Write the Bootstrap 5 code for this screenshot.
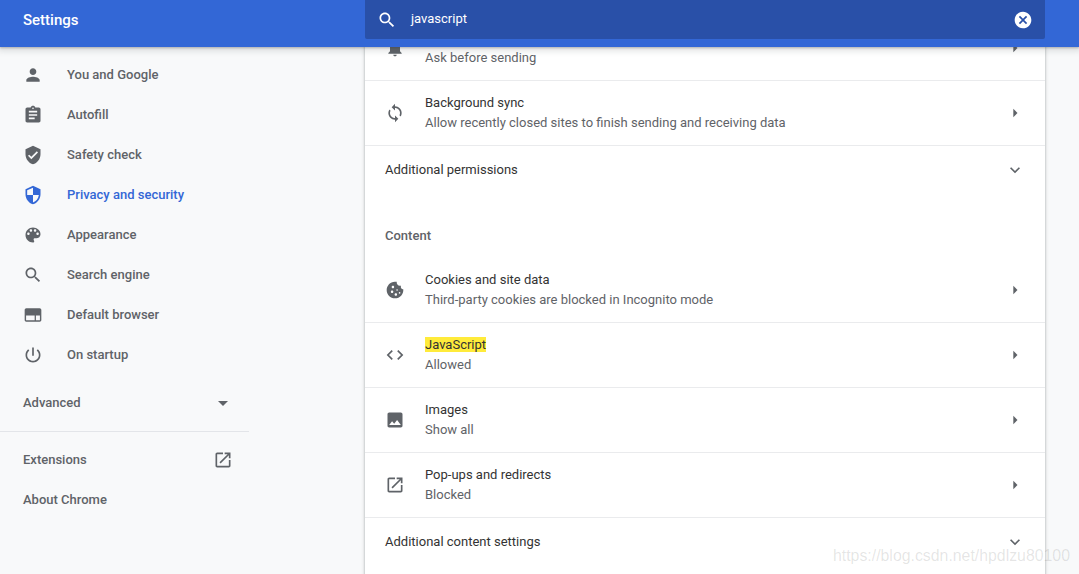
<!DOCTYPE html>
<html lang="en">
<head>
<meta charset="utf-8">
<title>Settings</title>
<link href="https://cdn.jsdelivr.net/npm/bootstrap@5.3.0/dist/css/bootstrap.min.css" rel="stylesheet">
<style>
html,body{height:100%;overflow:hidden}
body{background:#f8f9fa;font-family:Roboto,"Liberation Sans",sans-serif;font-size:13px;color:#333}
svg{fill:currentColor;flex:none;display:block}
.shell{height:574px;position:relative}
.topbar{height:47px;background:#3367d6;color:#fff;position:relative;z-index:2;box-shadow:0 1px 2px rgba(60,64,67,.3),0 2px 6px 2px rgba(60,64,67,.15)}
.brand{width:365px;padding-left:23px;font-size:15px;font-weight:500;height:39px;line-height:40px}
.searchbox{width:680px;height:39px;background:#2950a8;padding:0 12px 0 12px;border-radius:0 0 2px 2px}
.searchbox .term{margin-left:14px;font-size:13px;flex:1;padding-bottom:2px}
.body-area{height:527px;overflow:hidden}
.side{width:249px;padding-top:8px;color:#5f6368;font-weight:500}
.side-item{height:40px;padding-left:23px;gap:20px}
.side-item.on{color:#3367d6}
.side-plain{height:40px;padding:0 16px 0 23px}
.side-rule{border-top:1px solid #e3e5e9;margin:8px 0}
.adv{margin-top:8px}
.adv svg{margin-right:-2px}
.gutter{width:116px;flex:none}
.sheet{width:680px;flex:none;background:#fff;margin-top:-31px;height:600px;box-shadow:0 1px 2px 0 rgba(60,64,67,.3),0 1px 3px 1px rgba(60,64,67,.15)}
.line-item{height:65px;padding:0 20px;border-bottom:1px solid #eaebed;gap:20px;color:#5f6368}
.line-item .txt{flex:1;line-height:20px}
.line-item .ttl{color:#333;display:block;min-height:20px}
.line-item .sub{display:block}
.extra{height:48px;padding:0 20px;color:#333}
.extra svg{color:#5f6368}
.section-head{color:#5f6368;font-weight:500;height:64px;padding:32px 20px 0;line-height:20px}
.hit{background:#ffeb3b}
.stamp{position:absolute;left:833px;top:546px;font-family:"Liberation Sans",Arial,sans-serif;font-size:15.85px;line-height:20px;color:rgba(90,90,90,.16);z-index:3;white-space:nowrap}
</style>
</head>
<body>
<div class="shell">
  <header class="topbar d-flex">
    <div class="brand">Settings</div>
    <div class="searchbox d-flex align-items-center">
      <svg width="20" height="20" viewBox="0 0 24 24"><path d="M15.5 14h-.79l-.28-.27C15.41 12.59 16 11.11 16 9.5 16 5.91 13.09 3 9.5 3S3 5.91 3 9.5 5.91 16 9.5 16c1.61 0 3.09-.59 4.23-1.57l.27.28v.79l5 4.99L20.49 19l-4.99-5zm-6 0C7.01 14 5 11.99 5 9.5S7.01 5 9.5 5 14 7.01 14 9.5 11.99 14 9.5 14z"/></svg>
      <span class="term">javascript</span>
      <svg width="20" height="20" viewBox="0 0 24 24"><path d="M12 2C6.47 2 2 6.47 2 12s4.47 10 10 10 10-4.47 10-10S17.53 2 12 2zm5 13.59L15.59 17 12 13.41 8.41 17 7 15.59 10.59 12 7 8.41 8.41 7 12 10.59 15.59 7 17 8.41 13.41 12 17 15.59z"/></svg>
    </div>
  </header>
  <div class="body-area d-flex">
    <nav class="side flex-shrink-0">
      <div class="side-item d-flex align-items-center"><svg width="20" height="20" viewBox="0 0 24 24"><path d="M12 12c2.21 0 4-1.79 4-4s-1.79-4-4-4-4 1.79-4 4 1.79 4 4 4zm0 2c-2.67 0-8 1.34-8 4v2h16v-2c0-2.66-5.33-4-8-4z"/></svg><span class="ms-1">You and Google</span></div>
      <div class="side-item d-flex align-items-center"><svg width="20" height="20" viewBox="0 0 24 24"><path d="M19 3h-4.18C14.4 1.84 13.3 1 12 1c-1.3 0-2.4.84-2.82 2H5c-1.1 0-2 .9-2 2v14c0 1.1.9 2 2 2h14c1.1 0 2-.9 2-2V5c0-1.1-.9-2-2-2zm-7 0c.55 0 1 .45 1 1s-.45 1-1 1-1-.45-1-1 .45-1 1-1zm2 14H7v-2h7v2zm3-4H7v-2h10v2zm0-4H7V7h10v2z"/></svg><span class="ms-1">Autofill</span></div>
      <div class="side-item d-flex align-items-center"><svg width="20" height="20" viewBox="0 0 24 24"><path d="M12 1L3 5v6c0 5.55 3.84 10.74 9 12 5.16-1.26 9-6.45 9-12V5l-9-4zm-2 16l-4-4 1.41-1.41L10 14.17l6.59-6.59L18 9l-8 8z"/></svg><span class="ms-1">Safety check</span></div>
      <div class="side-item on d-flex align-items-center"><svg width="20" height="20" viewBox="0 0 24 24"><path d="M12 1L3 5v6c0 5.55 3.84 10.74 9 12 5.16-1.26 9-6.45 9-12V5l-9-4zm0 10.99h7c-.53 4.12-3.28 7.79-7 8.94V12H5V6.3l7-3.11v8.8z"/></svg><span class="ms-1">Privacy and security</span></div>
      <div class="side-item d-flex align-items-center"><svg width="20" height="20" viewBox="0 0 24 24"><path d="M12 3c-4.97 0-9 4.03-9 9s4.03 9 9 9c.83 0 1.5-.67 1.5-1.5 0-.39-.15-.74-.39-1.01-.23-.26-.38-.61-.38-.99 0-.83.67-1.5 1.5-1.5H16c2.76 0 5-2.24 5-5 0-4.42-4.03-8-9-8zm-5.5 9c-.83 0-1.5-.67-1.5-1.5S5.67 9 6.5 9 8 9.67 8 10.5 7.33 12 6.5 12zm3-4C8.67 8 8 7.33 8 6.5S8.67 5 9.5 5s1.5.67 1.5 1.5S10.33 8 9.5 8zm5 0c-.83 0-1.5-.67-1.5-1.5S13.67 5 14.5 5s1.5.67 1.5 1.5S15.33 8 14.5 8zm3 4c-.83 0-1.5-.67-1.5-1.5S16.67 9 17.5 9s1.5.67 1.5 1.5-.67 1.5-1.5 1.5z"/></svg><span class="ms-1">Appearance</span></div>
      <div class="side-item d-flex align-items-center"><svg width="20" height="20" viewBox="0 0 24 24"><path d="M15.5 14h-.79l-.28-.27C15.41 12.59 16 11.11 16 9.5 16 5.91 13.09 3 9.5 3S3 5.91 3 9.5 5.91 16 9.5 16c1.61 0 3.09-.59 4.23-1.57l.27.28v.79l5 4.99L20.49 19l-4.99-5zm-6 0C7.01 14 5 11.99 5 9.5S7.01 5 9.5 5 14 7.01 14 9.5 11.99 14 9.5 14z"/></svg><span class="ms-1">Search engine</span></div>
      <div class="side-item d-flex align-items-center"><svg width="20" height="20" viewBox="0 0 24 24"><path fill-rule="evenodd" d="M20 4H4c-1.1 0-2 .9-2 2v12c0 1.1.9 2 2 2h16c1.1 0 2-.9 2-2V6c0-1.1-.9-2-2-2zM14 18.4H3.7v-5.9H14zm6.3 0h-4.8v-5.9h4.8z"/></svg><span class="ms-1">Default browser</span></div>
      <div class="side-item d-flex align-items-center"><svg width="20" height="20" viewBox="0 0 24 24"><path d="M13 3h-2v10h2V3zm4.83 2.17l-1.42 1.42C17.99 7.86 19 9.81 19 12c0 3.87-3.13 7-7 7s-7-3.13-7-7c0-2.19 1.01-4.14 2.58-5.42L6.17 5.17C4.23 6.82 3 9.26 3 12c0 4.97 4.03 9 9 9s9-4.03 9-9c0-2.74-1.23-5.18-3.17-6.83z"/></svg><span class="ms-1">On startup</span></div>
      <div class="side-plain adv d-flex align-items-center justify-content-between"><span>Advanced</span><svg width="24" height="24" viewBox="0 0 24 24"><path d="M7 10l5 5 5-5z"/></svg></div>
      <div class="side-rule"></div>
      <div class="side-plain d-flex align-items-center justify-content-between"><span>Extensions</span><svg width="20" height="20" viewBox="0 0 24 24"><path d="M19 19H5V5h7V3H5c-1.11 0-2 .9-2 2v14c0 1.1.89 2 2 2h14c1.1 0 2-.9 2-2v-7h-2v7zM14 3v2h3.59l-9.83 9.83 1.41 1.41L19 6.41V10h2V3h-7z"/></svg></div>
      <div class="side-plain d-flex align-items-center"><span>About Chrome</span></div>
    </nav>
    <div class="gutter"></div>
    <main class="sheet">
      <div class="line-item d-flex align-items-center"><svg width="20" height="20" viewBox="0 0 24 24"><path d="M12 22c1.1 0 2-.9 2-2h-4c0 1.1.9 2 2 2zm6-6v-5c0-3.07-1.63-5.64-4.5-6.32V4c0-.83-.67-1.5-1.5-1.5s-1.5.67-1.5 1.5v.68C7.64 5.36 6 7.92 6 11v5l-2 2v1h16v-1l-2-2z"/></svg><div class="txt"><span class="ttl"></span><span class="sub">Ask before sending</span></div><svg width="20" height="20" viewBox="0 0 24 24"><path d="M10 7l5 5-5 5z"/></svg></div>
      <div class="line-item d-flex align-items-center"><svg width="20" height="20" viewBox="0 0 24 24"><path d="M12 4V1L8 5l4 4V6c3.31 0 6 2.69 6 6 0 1.01-.25 1.97-.7 2.8l1.46 1.46C19.54 15.03 20 13.57 20 12c0-4.42-3.58-8-8-8zm0 14c-3.31 0-6-2.69-6-6 0-1.01.25-1.97.7-2.8L5.24 7.74C4.46 8.97 4 10.43 4 12c0 4.42 3.58 8 8 8v3l4-4-4-4v3z"/></svg><div class="txt"><span class="ttl">Background sync</span><span class="sub">Allow recently closed sites to finish sending and receiving data</span></div><svg width="20" height="20" viewBox="0 0 24 24"><path d="M10 7l5 5-5 5z"/></svg></div>
      <div class="extra d-flex align-items-center justify-content-between"><span>Additional permissions</span><svg width="20" height="20" viewBox="0 0 24 24"><path d="M16.59 8.59L12 13.17 7.41 8.59 6 10l6 6 6-6z"/></svg></div>
      <div class="section-head">Content</div>
      <div class="line-item d-flex align-items-center"><svg width="20" height="20" viewBox="0 0 24 24"><path fill-rule="evenodd" d="M21.95 10.99c-1.79-.03-3.7-1.95-2.68-4.22-2.97 1-5.78-1.59-5.19-4.56C7.11.74 2 6.41 2 12c0 5.52 4.48 10 10 10 5.89 0 10.54-5.08 9.95-11.01zM8.5 15.5c-.83 0-1.5-.67-1.5-1.5s.67-1.5 1.5-1.5 1.5.67 1.5 1.5-.67 1.5-1.5 1.5zm1-5.5C8.67 10 8 9.33 8 8.5S8.67 7 9.5 7s1.5.67 1.5 1.5-.67 1.5-1.5 1.5zm3.5 9c-.83 0-1.5-.67-1.5-1.5s.67-1.5 1.5-1.5 1.5.67 1.5 1.5-.67 1.5-1.5 1.5zm1.5-6c-.55 0-1-.45-1-1s.45-1 1-1 1 .45 1 1-.45 1-1 1zm3 3.5c-.55 0-1-.45-1-1s.45-1 1-1 1 .45 1 1-.45 1-1 1z"/></svg><div class="txt"><span class="ttl">Cookies and site data</span><span class="sub">Third-party cookies are blocked in Incognito mode</span></div><svg width="20" height="20" viewBox="0 0 24 24"><path d="M10 7l5 5-5 5z"/></svg></div>
      <div class="line-item d-flex align-items-center"><svg width="20" height="20" viewBox="0 0 24 24"><path d="M9.4 16.6L4.8 12l4.6-4.6L8 6l-6 6 6 6 1.4-1.4zm5.2 0l4.6-4.6-4.6-4.6L16 6l6 6-6 6-1.4-1.4z"/></svg><div class="txt"><span class="ttl"><span class="hit">JavaScript</span></span><span class="sub">Allowed</span></div><svg width="20" height="20" viewBox="0 0 24 24"><path d="M10 7l5 5-5 5z"/></svg></div>
      <div class="line-item d-flex align-items-center"><svg width="20" height="20" viewBox="0 0 24 24"><path d="M21 19V5c0-1.1-.9-2-2-2H5c-1.1 0-2 .9-2 2v14c0 1.1.9 2 2 2h14c1.1 0 2-.9 2-2zM8.5 13.5l2.5 3.01L14.5 12l4.5 6H5l3.5-4.5z"/></svg><div class="txt"><span class="ttl">Images</span><span class="sub">Show all</span></div><svg width="20" height="20" viewBox="0 0 24 24"><path d="M10 7l5 5-5 5z"/></svg></div>
      <div class="line-item d-flex align-items-center"><svg width="20" height="20" viewBox="0 0 24 24"><path d="M19 19H5V5h7V3H5c-1.11 0-2 .9-2 2v14c0 1.1.89 2 2 2h14c1.1 0 2-.9 2-2v-7h-2v7zM14 3v2h3.59l-9.83 9.83 1.41 1.41L19 6.41V10h2V3h-7z"/></svg><div class="txt"><span class="ttl">Pop-ups and redirects</span><span class="sub">Blocked</span></div><svg width="20" height="20" viewBox="0 0 24 24"><path d="M10 7l5 5-5 5z"/></svg></div>
      <div class="extra d-flex align-items-center justify-content-between"><span>Additional content settings</span><svg width="20" height="20" viewBox="0 0 24 24"><path d="M16.59 8.59L12 13.17 7.41 8.59 6 10l6 6 6-6z"/></svg></div>
    </main>
  </div>
  <div class="stamp">https://blog.csdn.net/hpdlzu80100</div>
</div>
<script src="https://cdn.jsdelivr.net/npm/bootstrap@5.3.0/dist/js/bootstrap.bundle.min.js"></script>
</body>
</html>
